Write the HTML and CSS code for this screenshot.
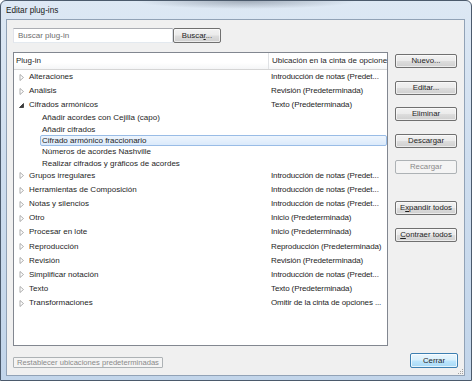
FILE: index.html
```html
<!DOCTYPE html>
<html lang="es">
<head>
  <meta charset="UTF-8" />
  <title>Editar plug-ins</title>
  <link rel="stylesheet" href="styles.css">
</head>
<body>

<div class="window">
  <div class="titlebar">Editar plug-ins</div>

  <div class="client">
    <div class="search-row">
      <input type="text" class="search-input" placeholder="Buscar plug-in" />
      <button class="btn btn-search">Busca<u>r</u>...</button>
    </div>

    <div class="main-row">
      <div class="list">
        <div class="list-head">
          <span class="col-name">Plug-in</span>
          <span class="col-loc">Ubicación en la cinta de opciones</span>
        </div>

        <div class="row"><span class="name"><svg class="arrow" viewBox="0 0 5 7"><polygon points="1,0.5 4.5,3.5 1,6.5" /></svg>Alteraciones</span><span class="loc">Introducción de notas (Predet...</span></div>
        <div class="row"><span class="name"><svg class="arrow" viewBox="0 0 5 7"><polygon points="1,0.5 4.5,3.5 1,6.5" /></svg>Análisis</span><span class="loc">Revisión (Predeterminada)</span></div>
        <div class="row"><span class="name"><svg class="arrow open" viewBox="0 0 5 7"><polygon points="4.5,1.5 4.5,5.5 0.5,5.5" /></svg>Cifrados armónicos</span><span class="loc">Texto (Predeterminada)</span></div>
        <div class="row child"><span class="name">Añadir acordes con Cejilla (capo)</span></div>
        <div class="row child"><span class="name">Añadir cifrados</span></div>
        <div class="row child selected"><span class="name">Cifrado armónico fraccionario</span></div>
        <div class="row child"><span class="name">Números de acordes Nashville</span></div>
        <div class="row child"><span class="name">Realizar cifrados y gráficos de acordes</span></div>
        <div class="row"><span class="name"><svg class="arrow" viewBox="0 0 5 7"><polygon points="1,0.5 4.5,3.5 1,6.5" /></svg>Grupos irregulares</span><span class="loc">Introducción de notas (Predet...</span></div>
        <div class="row"><span class="name"><svg class="arrow" viewBox="0 0 5 7"><polygon points="1,0.5 4.5,3.5 1,6.5" /></svg>Herramientas de Composición</span><span class="loc">Introducción de notas (Predet...</span></div>
        <div class="row"><span class="name"><svg class="arrow" viewBox="0 0 5 7"><polygon points="1,0.5 4.5,3.5 1,6.5" /></svg>Notas y silencios</span><span class="loc">Introducción de notas (Predet...</span></div>
        <div class="row"><span class="name"><svg class="arrow" viewBox="0 0 5 7"><polygon points="1,0.5 4.5,3.5 1,6.5" /></svg>Otro</span><span class="loc">Inicio (Predeterminada)</span></div>
        <div class="row"><span class="name"><svg class="arrow" viewBox="0 0 5 7"><polygon points="1,0.5 4.5,3.5 1,6.5" /></svg>Procesar en lote</span><span class="loc">Inicio (Predeterminada)</span></div>
        <div class="row"><span class="name"><svg class="arrow" viewBox="0 0 5 7"><polygon points="1,0.5 4.5,3.5 1,6.5" /></svg>Reproducción</span><span class="loc">Reproducción (Predeterminada)</span></div>
        <div class="row"><span class="name"><svg class="arrow" viewBox="0 0 5 7"><polygon points="1,0.5 4.5,3.5 1,6.5" /></svg>Revisión</span><span class="loc">Revisión (Predeterminada)</span></div>
        <div class="row"><span class="name"><svg class="arrow" viewBox="0 0 5 7"><polygon points="1,0.5 4.5,3.5 1,6.5" /></svg>Simplificar notación</span><span class="loc">Introducción de notas (Predet...</span></div>
        <div class="row"><span class="name"><svg class="arrow" viewBox="0 0 5 7"><polygon points="1,0.5 4.5,3.5 1,6.5" /></svg>Texto</span><span class="loc">Texto (Predeterminada)</span></div>
        <div class="row"><span class="name"><svg class="arrow" viewBox="0 0 5 7"><polygon points="1,0.5 4.5,3.5 1,6.5" /></svg>Transformaciones</span><span class="loc">Omitir de la cinta de opciones ...</span></div>
      </div>

      <div class="side-buttons">
        <button class="btn">Nuevo...</button>
        <button class="btn">Editar...</button>
        <button class="btn">Eliminar</button>
        <button class="btn">Descargar</button>
        <button class="btn" disabled>Recargar</button>
        <button class="btn btn-expand">E<u>x</u>pandir todos</button>
        <button class="btn"><u>C</u>ontraer todos</button>
      </div>
    </div>

    <div class="bottom-row">
      <button class="btn btn-reset" disabled>Restablecer ubicaciones predeterminadas</button>
      <button class="btn btn-default">Cerrar</button>
    </div>

    <svg class="grip" viewBox="0 0 7 7">
      <rect x="5" y="1" width="1" height="1" />
      <rect x="3" y="3" width="1" height="1" />
      <rect x="5" y="3" width="1" height="1" />
      <rect x="1" y="5" width="1" height="1" />
      <rect x="3" y="5" width="1" height="1" />
      <rect x="5" y="5" width="1" height="1" />
    </svg>
  </div>
</div>

</body>
</html>
```

FILE: styles.css
```css
* {
  box-sizing: border-box;
}

body {
  margin: 0;
  font-family: "Liberation Sans", Arial, sans-serif;
  font-size: 8px;
  color: #1e1e1e;
  background: #ffffff;
}

.window {
  width: 472px;
  height: 381px;
  border: 1px solid #4b5a6c;
  border-radius: 6px 6px 0 0;
  padding: 0 6px 4px 5px;
  display: flex;
  flex-direction: column;
  background:
    radial-gradient(ellipse 110px 8px at 245px 0, rgba(90, 100, 115, 0.45), rgba(90, 100, 115, 0) 100%),
    linear-gradient(180deg, #dde8f4 0%, #cfdeef 40%, #c2d5ea 100%);
}

.titlebar {
  height: 18px;
  line-height: 20px;
  color: #1a1a1a;
  font-size: 8.2px;
}

.client {
  position: relative;
  flex: 1;
  background: #f0f0f0;
  border: 1px solid #91a2b6;
  padding: 8px 6px 7px 6px;
  display: flex;
  flex-direction: column;
}

/* search */

.search-row {
  display: flex;
  height: 15px;
}

.search-input {
  width: 160px;
  height: 15px;
  margin: 0;
  padding: 0 4px;
  border: 1px solid;
  border-color: #abadb3 #dbdfe6 #e3e9ef #e2e3ea;
  background: #fff;
  font-family: inherit;
  font-size: 8px;
  color: #1e1e1e;
  outline: none;
}

.search-input::placeholder {
  color: #6d6d6d;
}

.btn-search {
  margin-left: 6px;
  width: 48px;
}

/* buttons */

.btn {
  height: 14px;
  padding: 0;
  margin: 0;
  font-family: inherit;
  font-size: 7.8px;
  color: #1e1e1e;
  border: 1px solid #707070;
  border-radius: 2px;
  background: linear-gradient(180deg, #f2f2f2 0%, #ebebeb 48%, #dddddd 52%, #cfcfcf 100%);
  box-shadow: inset 0 0 0 1px rgba(255, 255, 255, 0.6);
  line-height: 12px;
  text-align: center;
  white-space: nowrap;
  overflow: hidden;
}

.btn u {
  text-decoration-thickness: 1px;
  text-underline-offset: 1px;
}

.btn:disabled {
  color: #8a8a8a;
  border-color: #adb2b5;
  background: #f4f4f4;
  box-shadow: none;
}

.btn-search {
  height: 15px;
}

.btn-default {
  width: 48px;
  height: 15px;
  border-color: #3c7fb1;
  background: linear-gradient(180deg, #eaf6fd 0%, #d9f0fc 48%, #bee6fd 52%, #a7d9f5 100%);
  box-shadow: inset 0 0 0 1px rgba(255, 255, 255, 0.7);
}

.btn-reset {
  width: 150px;
  height: 11px;
  line-height: 9px;
  border-radius: 1px;
  font-size: 7.6px;
  color: #666666;
}

/* list */

.main-row {
  display: flex;
  margin-top: 9px;
  height: 294px;
}

.list {
  width: 375px;
  height: 294px;
  border: 1px solid #828790;
  background: #fff;
  overflow: hidden;
}

.list-head {
  display: grid;
  grid-template-columns: 254px 1fr;
  height: 17px;
  line-height: 16px;
  border-bottom: 1px solid #d5d5d5;
  background: linear-gradient(180deg, #ffffff 0%, #ffffff 60%, #f5f6f7 100%);
  white-space: nowrap;
  overflow: hidden;
}

.col-name {
  padding-left: 2px;
}

.col-loc {
  border-left: 1px solid #e0e2e5;
  padding-left: 3px;
  overflow: hidden;
}

.row {
  display: grid;
  grid-template-columns: 254px 1fr;
  height: 14.15px;
  line-height: 14.15px;
  white-space: nowrap;
}

.name {
  display: flex;
  align-items: center;
  padding-left: 5px;
  overflow: hidden;
}

.loc {
  padding-left: 3px;
  letter-spacing: -0.12px;
  overflow: hidden;
}

.arrow {
  width: 5px;
  height: 7px;
  margin-right: 5px;
  flex-shrink: 0;
}

.arrow polygon {
  fill: #ffffff;
  stroke: #a6a6a6;
  stroke-width: 0.9;
}

.arrow.open polygon {
  fill: #3c3c3c;
  stroke: #3c3c3c;
}

.row.child {
  height: 11.3px;
  line-height: 11.3px;
  margin-left: 26px;
  grid-template-columns: 1fr;
}

.row.child .name {
  padding-left: 2px;
}

.row.selected {
  border: 1px solid #99bce6;
  border-radius: 2px;
  background: linear-gradient(180deg, #eef5fd 0%, #dbeafb 100%);
  line-height: 9.3px;
}

.row.selected .name {
  padding-left: 1px;
}

/* side buttons */

.side-buttons {
  display: flex;
  flex-direction: column;
  margin-left: 7px;
  padding-top: 2px;
  gap: 12.5px;
}

.side-buttons .btn {
  width: 62px;
}

.side-buttons .btn-expand {
  margin-top: 14.5px;
}

/* bottom */

.bottom-row {
  display: flex;
  justify-content: space-between;
  align-items: flex-end;
  margin-top: 7px;
  height: 15px;
}

.grip {
  position: absolute;
  right: 0;
  bottom: 0;
  width: 7px;
  height: 7px;
}

.grip rect {
  fill: #a0a0a0;
}
```
